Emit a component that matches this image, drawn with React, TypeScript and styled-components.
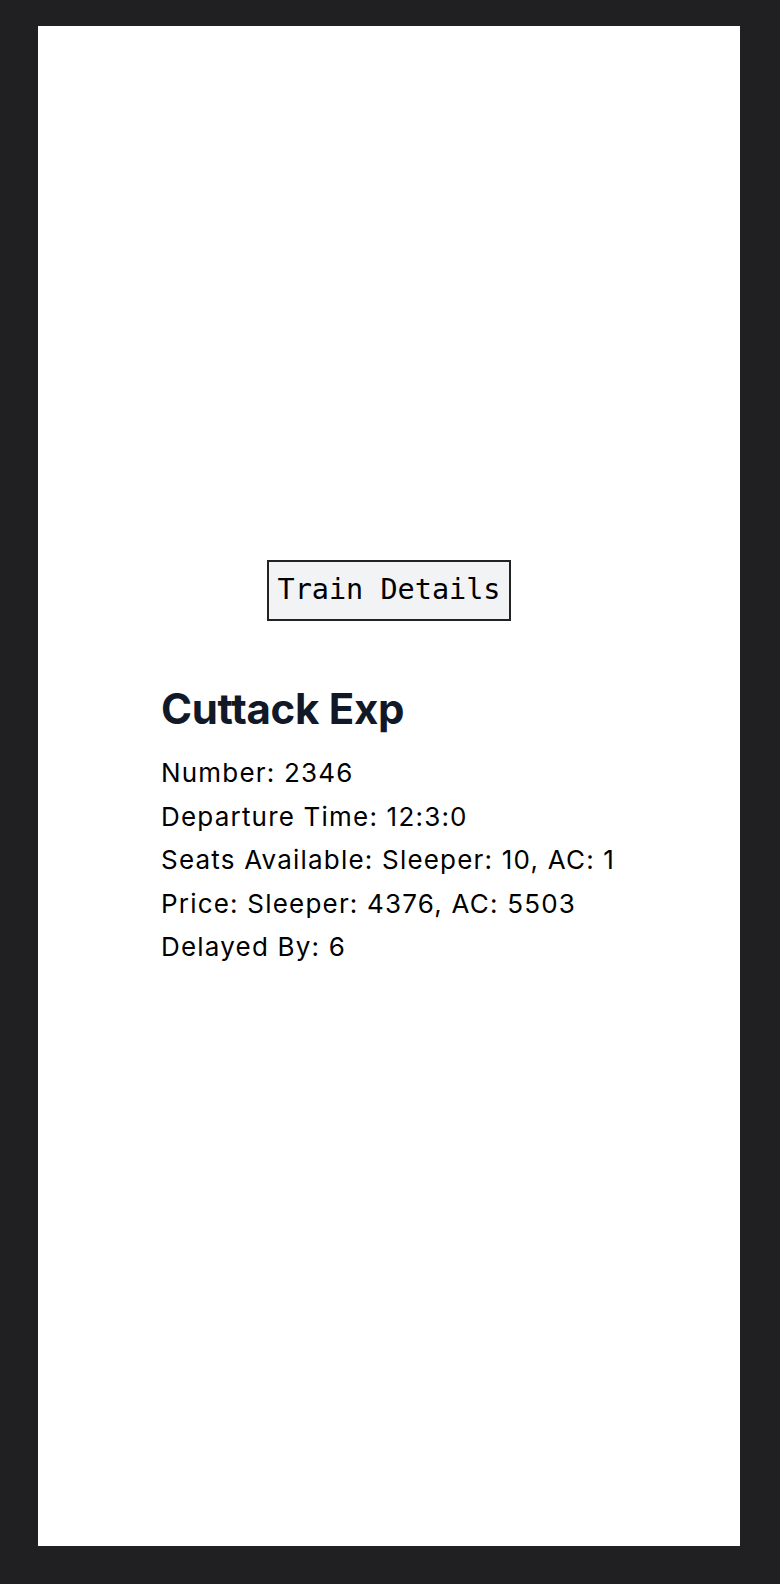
import React from "react";
import styled, { createGlobalStyle } from "styled-components";

const Global = createGlobalStyle`
  html, body { margin: 0; padding: 0; background: #202022; }
  body { font-family: Inter, "Noto Sans", sans-serif; }
`;

const Page = styled.div`
  width: 780px;
  height: 1584px;
  box-sizing: border-box;
  padding: 26px 40px 38px 38px;
`;

const Panel = styled.main`
  background: #ffffff;
  height: 100%;
  box-sizing: border-box;
  padding-top: 534px;
  display: flex;
  flex-direction: column;
  align-items: center;
`;

const DetailsButton = styled.button`
  font-family: "DejaVu Sans Mono", monospace;
  font-size: 28.5px;
  line-height: 1;
  color: #000;
  background: #f2f3f5;
  border: 2px solid #222;
  width: 244px;
  height: 61px;
  padding: 0;
  cursor: pointer;
`;

const Card = styled.section`
  align-self: stretch;
  padding: 0 0 0 123px;
  margin-top: 62px;
`;

const Title = styled.h2`
  margin: 0 0 16px 0;
  font-family: Inter, sans-serif;
  font-weight: 700;
  font-size: 42px;
  line-height: 52px;
  letter-spacing: -0.3px;
  color: #111827;
`;

const Line = styled.p`
  margin: 0;
  font-family: Inter, sans-serif;
  font-size: 26px;
  line-height: 43.6px;
  letter-spacing: 1.2px;
  color: #000;
`;

export default function App() {
  const lines = [
    "Number: 2346",
    "Departure Time: 12:3:0",
    "Seats Available: Sleeper: 10, AC: 1",
    "Price: Sleeper: 4376, AC: 5503",
    "Delayed By: 6",
  ];
  return (
    <>
      <Global />
      <Page>
        <Panel>
          <DetailsButton>Train Details</DetailsButton>
          <Card>
            <Title>Cuttack Exp</Title>
            {lines.map((l) => (
              <Line key={l}>{l}</Line>
            ))}
          </Card>
        </Panel>
      </Page>
    </>
  );
}
